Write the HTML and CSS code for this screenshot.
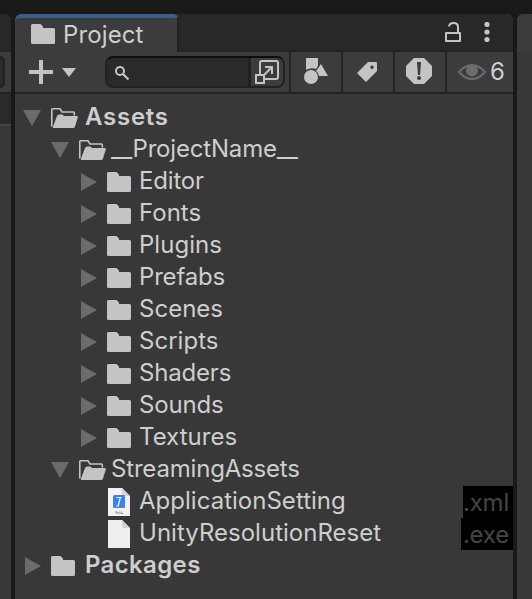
FILE: index.html
```
<!DOCTYPE html>
<html lang="en">
<head>
<meta charset="utf-8">
<title>Project</title>
<link rel="stylesheet" href="styles.css">
</head>
<body>
<svg width="0" height="0" class="defs">
  <symbol id="folder" viewBox="0 0 27 20"><path d="M1.500 0H9.500L12 2.500V4H22.500Q24 4 24 5.500V18.500Q24 20 22.500 20H1.500Q0 20 0 18.500V1.500Q0 0 1.500 0z"/></symbol>
  <symbol id="open" viewBox="0 0 27 20"><path d="M.8 18.500V1.600Q.8.8 1.600.8H9L11 4H22.500Q23.300 4 23.300 5V7.500" fill="none" stroke="currentColor" stroke-width="1.600"/><path d="M8 6.500H11.500L13 8H25.500Q27.300 8 26.800 9.500L24 18.500Q23.500 20 22 20H3Q1.500 20 2 18.500L6 8Q6.600 6.500 8 6.500z"/></symbol>
  <symbol id="down" viewBox="0 0 18 18"><path d="M0 1h18L9 17z"/></symbol>
  <symbol id="right" viewBox="0 0 18 18"><path d="M2 0l16 9L2 18z"/></symbol>
</svg>
<div class="window">
  <aside class="side left"><div class="tabs"></div><div class="bar"><i></i></div><div class="field"></div><div class="rest"></div></aside>
  <main class="panel">
    <header class="tabs">
      <div class="tab"><svg class="folder"><use href="#folder"/></svg><span>Project</span></div>
      <svg class="lock" viewBox="0 0 16 20"><path d="M1 11h14v8H1zM4 4.500Q4.500 1 8.500 1Q13 1 13 5v6" fill="none" stroke="currentColor" stroke-width="2" stroke-linejoin="round"/></svg>
      <svg class="dots" viewBox="0 0 6 20"><circle cx="3" cy="2.500" r="2.600"/><circle cx="3" cy="10" r="2.600"/><circle cx="3" cy="17.500" r="2.600"/></svg>
    </header>
    <div class="toolbar">
      <svg class="plus" viewBox="0 0 24 24"><path d="M10 0h4v10h10v4H14v10h-4V14H0v-4h10z"/></svg>
      <svg class="caret" viewBox="0 0 14 9"><path d="M0 0h14L7 9z"/></svg>
      <div class="search">
        <svg class="glass" viewBox="0 0 15 15"><circle cx="5" cy="5" r="4" fill="none" stroke="currentColor" stroke-width="2"/><path d="M8 8l5.500 5.500" stroke="currentColor" stroke-width="2.200"/></svg>
        <div class="popout"><svg viewBox="0 0 24 24"><g fill="none" stroke="currentColor" stroke-width="2"><path d="M5 14V3q0-2 2-2h14q2 0 2 2v14q0 2-2 2H10M1 15h8v8H1zM9 15l8-8M10 7h7v7"/></g></svg></div>
      </div>
      <div class="tool"><svg width="24" height="26" viewBox="0 0 24 26"><path d="M2 0h12v8l-2 3Q7 9 2 12z"/><circle cx="7" cy="19" r="8" class="hole"/><circle cx="7" cy="19" r="7"/><path d="M17 6l7 12h-9q-1-4-3-5z"/></svg></div>
      <div class="tool tag"><svg width="20" height="20" viewBox="0 0 20 20"><path fill-rule="evenodd" d="M11 0h8q1 0 1 1v8L9 20 0 11zM15 3.500a1.700 1.700 0 1 0 .01 0z"/></svg></div>
      <div class="tool alert"><svg width="26" height="26" viewBox="0 0 26 26"><path d="M8 0h10l8 8v10l-8 8H8l-8-8V8z"/><path d="M11 4h4l-1 13h-2z" class="hole"/><circle cx="13" cy="20" r="2" class="hole"/></svg></div>
      <div class="tool hidden"><svg width="28" height="18" viewBox="0 0 28 18"><path d="M1 9Q7 2 14 2t13 7Q21 16 14 16T1 9z" fill="none" stroke="currentColor" stroke-width="2"/><circle cx="14" cy="7.500" r="6"/></svg><span>6</span></div>
    </div>
    <div class="tree">
      <div class="row bold"><svg class="arrow"><use href="#down"/></svg><svg class="folder"><use href="#open"/></svg><span class="assets">Assets</span></div>
      <div class="row l1"><svg class="arrow"><use href="#down"/></svg><svg class="folder"><use href="#open"/></svg><span class="tight"><i class="under">__</i>ProjectName<i class="under">__</i></span></div>
      <div class="row l2"><svg class="arrow"><use href="#right"/></svg><svg class="folder"><use href="#folder"/></svg><span class="tight">Editor</span></div>
      <div class="row l2"><svg class="arrow"><use href="#right"/></svg><svg class="folder"><use href="#folder"/></svg><span>Fonts</span></div>
      <div class="row l2"><svg class="arrow"><use href="#right"/></svg><svg class="folder"><use href="#folder"/></svg><span>Plugins</span></div>
      <div class="row l2"><svg class="arrow"><use href="#right"/></svg><svg class="folder"><use href="#folder"/></svg><span class="tight">Prefabs</span></div>
      <div class="row l2"><svg class="arrow"><use href="#right"/></svg><svg class="folder"><use href="#folder"/></svg><span>Scenes</span></div>
      <div class="row l2"><svg class="arrow"><use href="#right"/></svg><svg class="folder"><use href="#folder"/></svg><span>Scripts</span></div>
      <div class="row l2"><svg class="arrow"><use href="#right"/></svg><svg class="folder"><use href="#folder"/></svg><span class="tight">Shaders</span></div>
      <div class="row l2"><svg class="arrow"><use href="#right"/></svg><svg class="folder"><use href="#folder"/></svg><span class="tight">Sounds</span></div>
      <div class="row l2"><svg class="arrow"><use href="#right"/></svg><svg class="folder"><use href="#folder"/></svg><span>Textures</span></div>
      <div class="row l1"><svg class="arrow"><use href="#down"/></svg><svg class="folder"><use href="#open"/></svg><span class="tight">StreamingAssets</span></div>
      <div class="row l2 file"><svg class="doc" viewBox="0 0 22 28"><path d="M0 0h14l8 8v20H0z" fill="#f2f2f2"/><path d="M14 0v6q0 2 2 2h6z" fill="#d2d2d2"/><rect x="5" y="7" width="12" height="13" rx="1.500" fill="#3b82f0"/><path d="M8.500 9.500h5M12.500 9l-2.500 9.500M8.500 18h2" stroke="#fff" stroke-width="1.200" fill="none"/><path d="M7 24h2v2M11 23.500v2.500M13 23.500v2h2" stroke="#888" stroke-width="1" fill="none"/></svg><span>ApplicationSetting</span><b class="ext">.xml</b></div>
      <div class="row l2 file"><svg class="doc" viewBox="0 0 22 28"><path d="M0 0h14l8 8v20H0z" fill="#eee"/><path d="M14 0v6q0 2 2 2h6z" fill="#d2d2d2"/></svg><span>UnityResolutionReset</span><b class="ext wide">.exe</b></div>
      <div class="row bold"><svg class="arrow"><use href="#right"/></svg><svg class="folder"><use href="#folder"/></svg><span>Packages</span></div>
    </div>
  </main>
  <aside class="side right"></aside>
</div>
</body>
</html>
```

FILE: styles.css
```
* { box-sizing: border-box; }
body { margin: 0; background: #191919; color: #cecece; font: 400 24px/32px Inter, "Liberation Sans", sans-serif; overflow: hidden; }
svg { display: block; flex: none; fill: currentColor; }
.defs { position: absolute; }
.window { display: grid; grid-template-columns: 11px 498px 15px; column-gap: 4px; height: 599px; padding-top: 14px; }
.panel { background: #383838; border-radius: 6px 6px 0 0; overflow: hidden; }
.tabs { display: flex; height: 38px; background: #282828; border-bottom: 2px solid #232323; }
.tab { display: flex; width: 164px; height: 38px; padding: 0 0 0 16px; background: #3c3c3c; border-top: 4px solid #3a5f8c; border-right: 2px solid #232323; border-radius: 6px 6px 0 0; color: #cecece; }
.tab .folder { margin-top: 6px; color: #c4c4c4; }
.tab span { margin-left: 5px; line-height: 33px; letter-spacing: .12px; }
.folder { width: 27px; height: 20px; }
.lock { width: 16px; height: 20px; margin: 8px 0 0 266px; color: #c4c4c4; }
.dots { width: 6px; height: 20px; margin: 8px 0 0 23px; color: #c4c4c4; }
.toolbar { display: flex; align-items: center; height: 42px; background: #3c3c3c; border-bottom: 2px solid #232323; color: #c4c4c4; }
.plus { width: 24px; height: 24px; margin-left: 14px; }
.caret { width: 14px; height: 9px; margin: 1px 0 0 9px; }
.search { display: flex; width: 180px; height: 32px; margin: 0 4px 0 29px; border: 2px solid #212121; border-top-color: #0d0d0d; border-radius: 8px; background: #2a2a2a; overflow: hidden; }
.glass { width: 15px; height: 15px; margin: 8px 0 0 8px; }
.popout { width: 35px; margin-left: auto; padding: 2px 0 0 4px; border-left: 3px solid #212121; background: #3c3c3c; }
.popout svg { width: 24px; height: 24px; }
.tool { display: flex; align-items: center; justify-content: center; width: 52px; height: 40px; border-left: 2px solid #232323; padding-bottom: 2px; }
.tool.tag { padding: 0 3px 0 0; }
.tool.alert { padding-right: 2px; }
.tool .hole { fill: #3c3c3c; }
.tool.hidden { width: 68px; justify-content: flex-start; padding: 0 0 0 11px; color: #6c6c6c; }
.tool.hidden span { margin-left: 4px; color: #cecece; line-height: 34px; }
.tree { padding-top: 8px; }
.row { display: flex; align-items: center; height: 32px; padding-left: 8px; }
.row span { margin-left: 5px; line-height: 30px; height: 32px; white-space: nowrap; letter-spacing: .02px; }
.row span.tight { letter-spacing: -.18px; }
.under { display: inline-block; width: 21.500px; font-style: normal; letter-spacing: -.7px; }
.row.l1 { padding-left: 36px; }
.row.l2 { padding-left: 64px; }
.row.bold span { margin-left: 7px; font-weight: 600; letter-spacing: .35px; }
.row.bold span.assets { letter-spacing: .75px; }
.arrow { width: 18px; height: 18px; margin-right: 10px; color: #6c6c6c; }
.row .folder { color: #c4c4c4; }
.row.file { padding-left: 93px; }
.doc { width: 22px; height: 28px; margin-right: 4px; }
.ext { width: 50px; height: 32px; margin-left: auto; background: #000; color: #454545; font-weight: 400; line-height: 33px; text-align: right; padding-right: 4px; letter-spacing: -.2px; }
.ext.wide { width: 52px; }
.left { display: flex; flex-direction: column; background: #383838; border-radius: 0 6px 0 0; overflow: hidden; }
.bar { height: 42px; padding-top: 4px; background: #3c3c3c; border-bottom: 2px solid #232323; }
.bar i { display: block; width: 5px; height: 32px; background: #2a2a2a; border: 2px solid #212121; border-left: 0; border-radius: 0 8px 8px 0; }
.field { height: 32px; background: #2a2a2a; border-bottom: 2px solid #444; }
.right { background: linear-gradient(#3c3c3c 38px, #383838 38px); border-radius: 6px 0 0; }
```
